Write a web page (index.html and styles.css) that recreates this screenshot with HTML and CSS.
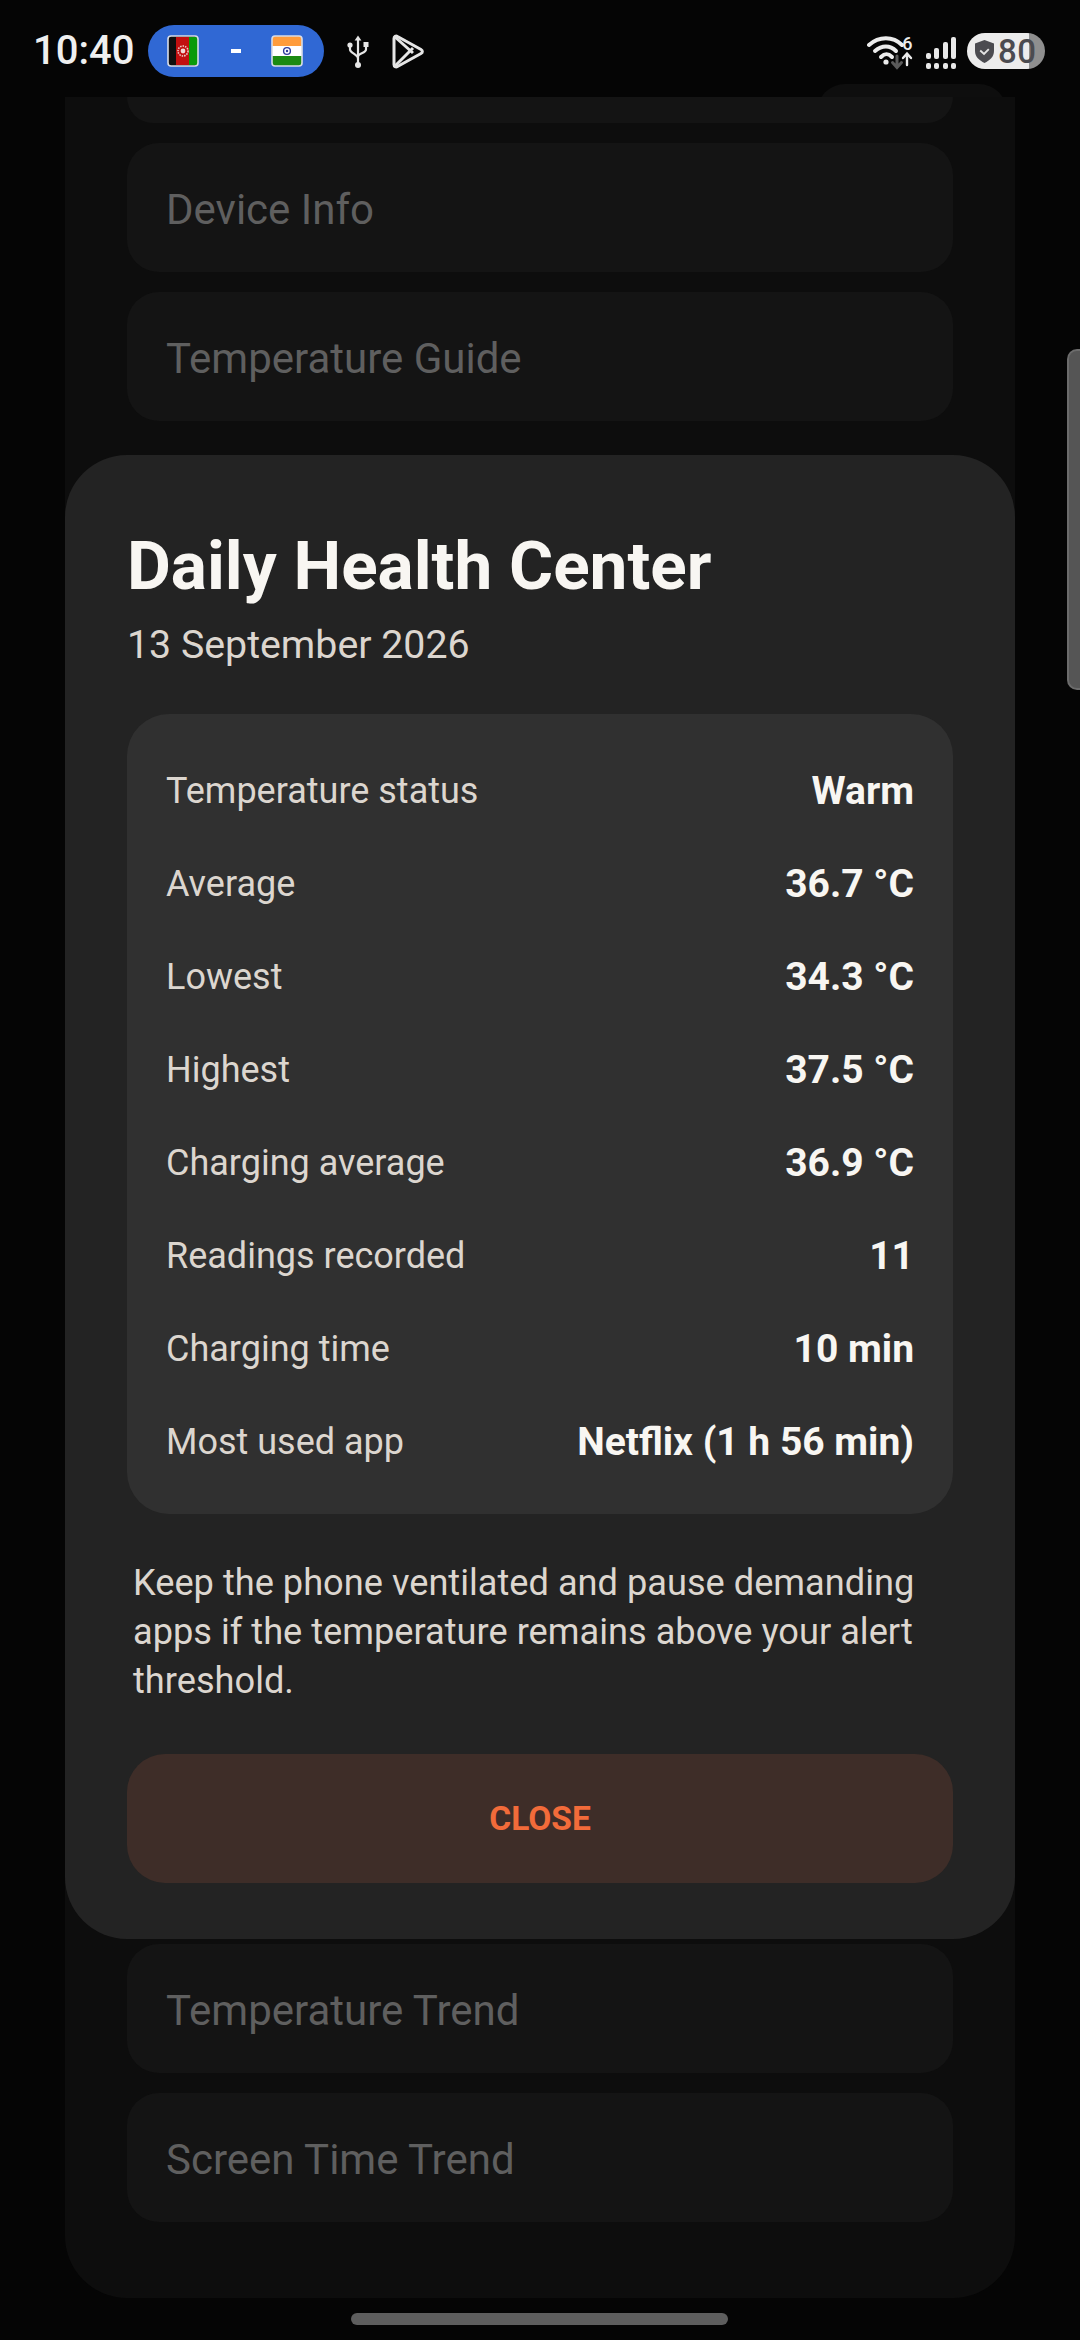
FILE: index.html
```html
<!DOCTYPE html>
<html lang="en">
<head>
    <meta charset="UTF-8">
    <meta name="viewport" content="width=device-width, initial-scale=1.0">
    <title>Daily Health Center</title>
    <link rel="stylesheet" href="styles.css">
</head>
<body>
    <div class="screen">
        <div class="status-bar">
            <span class="clock">10:40</span>
            <div class="score-pill">
                <svg class="flag" viewBox="0 0 32 32">
                    <rect x="1" y="1" width="30" height="30" rx="3" fill="#0f0f0f"/>
                    <path d="M9 2h13v28H9z" fill="#c20f10"/>
                    <path d="M22 2h7a2 2 0 0 1 2 2v24a2 2 0 0 1-2 2h-7z" fill="#0a9a0a"/>
                    <circle cx="16" cy="16" r="5" fill="none" stroke="#f0c8c8" stroke-width="1.6" stroke-dasharray="1.5 1"/>
                    <circle cx="16" cy="16" r="2.4" fill="#f0d8d8"/>
                    <rect x="1" y="1" width="30" height="30" rx="3" fill="none" stroke="#d8dce6" stroke-width="1.6"/>
                </svg>
                <span class="score-dash"></span>
                <svg class="flag" viewBox="0 0 32 32">
                    <path d="M4 1h24a3 3 0 0 1 3 3v7H1V4a3 3 0 0 1 3-3z" fill="#ff9c3c"/>
                    <path d="M1 11h30v10H1z" fill="#fff"/>
                    <path d="M1 21h30v7a3 3 0 0 1-3 3H4a3 3 0 0 1-3-3z" fill="#1b8a12"/>
                    <circle cx="16" cy="16" r="3.4" fill="none" stroke="#2f3c9c" stroke-width="1.4"/>
                    <circle cx="16" cy="16" r="1.2" fill="#2f3c9c"/>
                    <rect x="1" y="1" width="30" height="30" rx="3" fill="none" stroke="#d8dce6" stroke-width="1.6"/>
                </svg>
            </div>
            <svg class="usb-icon" viewBox="0 0 22 34" fill="none" stroke="#e6e6e6" stroke-width="2.2">
                <path d="M11 4v26"/>
                <path d="M11 0.5l3.4 5h-6.8z" fill="#e6e6e6" stroke="none"/>
                <circle cx="11" cy="30" r="3" fill="#e6e6e6" stroke="none"/>
                <path d="M3 11v3.5c0 3.5 8 5 8 9"/>
                <path d="M19 10v4.500c0 3.500-8 4-8 7"/>
                <circle cx="3" cy="10" r="2.600" fill="#e6e6e6" stroke="none"/>
                <rect x="16.500" y="7" width="5" height="5" fill="#e6e6e6" stroke="none"/>
            </svg>
            <svg class="play-icon" viewBox="0 0 32 35" fill="none" stroke="#e6e6e6" stroke-width="3" stroke-linejoin="round">
                <path d="M2 4.500c0-2 1.800-3 3.500-2L29 15.500c1.800 1 1.800 3 0 4L5.500 32.500c-1.700 1-3.500 0-3.500-2z"/>
                <path d="M3 3l18 16M3 32l18-18"/>
            </svg>
            <div class="status-right">
                <div class="net-icon">
                    <svg viewBox="0 0 48 36" fill="none" stroke-linecap="round">
                        <path d="M2 10C12 1 26 1 35 10" stroke="#ececec" stroke-width="4"/>
                        <path d="M8 16C15 10 23 10 29 16" stroke="#ececec" stroke-width="4"/>
                        <path d="M14 22C18 18 21 18 25 22" stroke="#ececec" stroke-width="4"/>
                        <circle cx="19" cy="27" r="2.600" fill="#ececec"/>
                        <path d="M30 21v11M25.500 27.500l4.500 5 4.500-5" stroke="#5a5a5a" stroke-width="3"/>
                        <path d="M40 30V19M36 23l4-4.500 4 4.500" stroke="#ececec" stroke-width="2.400"/>
                    </svg>
                    <span class="net-label">6</span>
                </div>
                <div class="signal">
                    <div class="signal-bar"><i class="bar-1"></i><b></b></div>
                    <div class="signal-bar"><i class="bar-2"></i><b></b></div>
                    <div class="signal-bar"><i class="bar-3"></i><b></b></div>
                    <div class="signal-bar"><i class="bar-4"></i><b></b></div>
                </div>
                <div class="battery">
                    <svg viewBox="0 0 20 24"><path d="M10 0l10 3.500v8c0 6-4.500 10-10 12.500C4.500 21.500 0 17.500 0 11.500v-8z" fill="#4b4b50"/><path d="M5.500 11l4 3.500 5-5" fill="none" stroke="#e4e4e4" stroke-width="2"/></svg>
                    <span class="battery-level">80</span>
                </div>
            </div>
            <div class="sheet-peek"></div>
        </div>

        <div class="back-card">
            <div class="back-row back-row-cut"></div>
            <div class="back-row">Device Info</div>
            <div class="back-row">Temperature Guide</div>
            <div class="back-row back-row-below">Temperature Trend</div>
            <div class="back-row">Screen Time Trend</div>
        </div>

        <div class="dialog">
            <h1>Daily Health Center</h1>
            <div class="dialog-date">13 September 2026</div>
            <div class="stats">
                <div class="stat"><span>Temperature status</span><strong>Warm</strong></div>
                <div class="stat"><span>Average</span><strong>36.7 °C</strong></div>
                <div class="stat"><span>Lowest</span><strong>34.3 °C</strong></div>
                <div class="stat"><span>Highest</span><strong>37.5 °C</strong></div>
                <div class="stat"><span>Charging average</span><strong>36.9 °C</strong></div>
                <div class="stat"><span>Readings recorded</span><strong>11</strong></div>
                <div class="stat"><span>Charging time</span><strong>10 min</strong></div>
                <div class="stat"><span>Most used app</span><strong>Netflix (1 h 56 min)</strong></div>
            </div>
            <p class="advice">Keep the phone ventilated and pause demanding apps if the temperature remains above your alert threshold.</p>
            <button class="close-btn">CLOSE</button>
        </div>

        <div class="scroll-thumb"></div>
        <div class="home-bar"></div>
    </div>
</body>
</html>
```

FILE: styles.css
```css
* {
    box-sizing: border-box;
}

body {
    margin: 0;
    background-color: #050505;
    font-family: 'Roboto', sans-serif;
}

.screen {
    position: relative;
    width: 1080px;
    height: 2340px;
    overflow: hidden;
    background-color: #050505;
}

/* status bar */
.status-bar {
    position: relative;
    height: 97px;
    padding: 25px 35px 0 33px;
    display: flex;
    align-items: flex-start;
}

.clock {
    width: 115px;
    height: 52px;
    line-height: 52px;
    font-size: 40px;
    font-weight: 500;
    color: #efefef;
}

.score-pill {
    width: 176px;
    height: 52px;
    padding: 0 21px 0 19px;
    display: flex;
    align-items: center;
    justify-content: space-between;
    background-color: #3068d4;
    border-radius: 26px;
}

.flag {
    width: 32px;
    height: 32px;
}

.score-dash {
    width: 10px;
    height: 4px;
    margin-left: 2px;
    background-color: #fff;
}

.usb-icon {
    width: 22px;
    height: 34px;
    margin: 10px 0 0 23px;
}

.play-icon {
    width: 32px;
    height: 35px;
    margin: 9px 0 0 23px;
}

.status-right {
    margin-left: auto;
    display: flex;
    align-items: flex-start;
    position: relative;
    z-index: 1;
}

.net-icon {
    position: relative;
    width: 48px;
    height: 36px;
    margin: 10px 11px 0 0;
}

.net-icon svg {
    width: 48px;
    height: 36px;
    display: block;
}

.net-label {
    position: absolute;
    top: 0;
    right: 2px;
    font-size: 18px;
    font-weight: 500;
    line-height: 18px;
    color: #ececec;
}

.signal {
    display: flex;
    gap: 3.5px;
    margin: 11px 11px 0 0;
}

.signal-bar {
    width: 5px;
    height: 33px;
    display: flex;
    flex-direction: column;
    justify-content: flex-end;
    gap: 4px;
}

.signal-bar i,
.signal-bar b {
    display: block;
    background-color: #e8e8e8;
    border-radius: 2px;
}

.signal-bar b {
    height: 6px;
}

.bar-1 { height: 6px; }
.bar-2 { height: 11px; }
.bar-3 { height: 17px; }
.bar-4 { height: 22px; }

.battery {
    width: 78px;
    height: 36px;
    margin-top: 8px;
    padding-left: 8px;
    display: flex;
    align-items: center;
    gap: 4px;
    border-radius: 18px;
    background: linear-gradient(to right, #ececec 62px, #8f8f8f 62px);
}

.battery svg {
    width: 19px;
    height: 23px;
}

.battery-level {
    font-size: 33px;
    font-weight: 500;
    color: #4b4b50;
    letter-spacing: 0.5px;
}

.sheet-peek {
    position: absolute;
    left: 817px;
    top: 84px;
    width: 190px;
    height: 40px;
    border-radius: 28px 28px 0 0;
    background-color: #0e0e0e;
}

/* page behind the dialog */
.back-card {
    position: relative;
    height: 2201px;
    margin: 0 65px;
    padding: 0 62px;
    background-color: #0d0d0d;
    border-radius: 0 0 62px 62px;
}

.back-row {
    height: 129px;
    margin-bottom: 20px;
    padding: 4px 0 0 39px;
    display: flex;
    align-items: center;
    font-size: 42px;
    color: #5f5f5f;
    background-color: #141414;
    border-radius: 32px;
}

.back-row-cut {
    height: 26px;
    border-radius: 0 0 32px 32px;
}

.back-row-below {
    margin-top: 1523px;
}

/* dialog */
.dialog {
    position: absolute;
    top: 455px;
    left: 65px;
    width: 950px;
    height: 1484px;
    padding: 72px 62px 0;
    background-color: #232323;
    border-radius: 62px;
}

.dialog h1 {
    margin: 0;
    font-size: 67.5px;
    line-height: 78px;
    font-weight: 700;
    color: #f8f6f2;
}

.dialog-date {
    margin-top: 18px;
    font-size: 39.3px;
    line-height: 44px;
    color: #dcd6cf;
}

.stats {
    margin-top: 47px;
    padding: 30px 39px 26px;
    height: 800px;
    background-color: #303030;
    border-radius: 42px;
}

.stat {
    height: 93px;
    display: flex;
    align-items: center;
    justify-content: space-between;
    font-size: 36px;
    color: #dcd6cf;
}

.stat strong {
    font-size: 39px;
    font-weight: 700;
    color: #f8f6f2;
}

.advice {
    margin: 44px 0 0;
    padding: 0 6px;
    font-size: 36.2px;
    line-height: 49px;
    color: #dcd6cf;
}

.close-btn {
    display: block;
    width: 100%;
    height: 129px;
    margin-top: 49px;
    border: none;
    border-radius: 38px;
    font-family: inherit;
    font-size: 33.5px;
    font-weight: 700;
    color: #f26b3a;
    background-color: #3e2d28;
}

.scroll-thumb {
    position: absolute;
    right: 0;
    top: 349px;
    width: 13px;
    height: 341px;
    background-color: #555;
    border: 2px solid #6c6c6c;
    border-right: none;
    border-radius: 10px 0 0 10px;
}

.home-bar {
    position: absolute;
    left: 351px;
    top: 2313px;
    width: 377px;
    height: 12px;
    border-radius: 6px;
    background-color: #5e5e5e;
}
```
